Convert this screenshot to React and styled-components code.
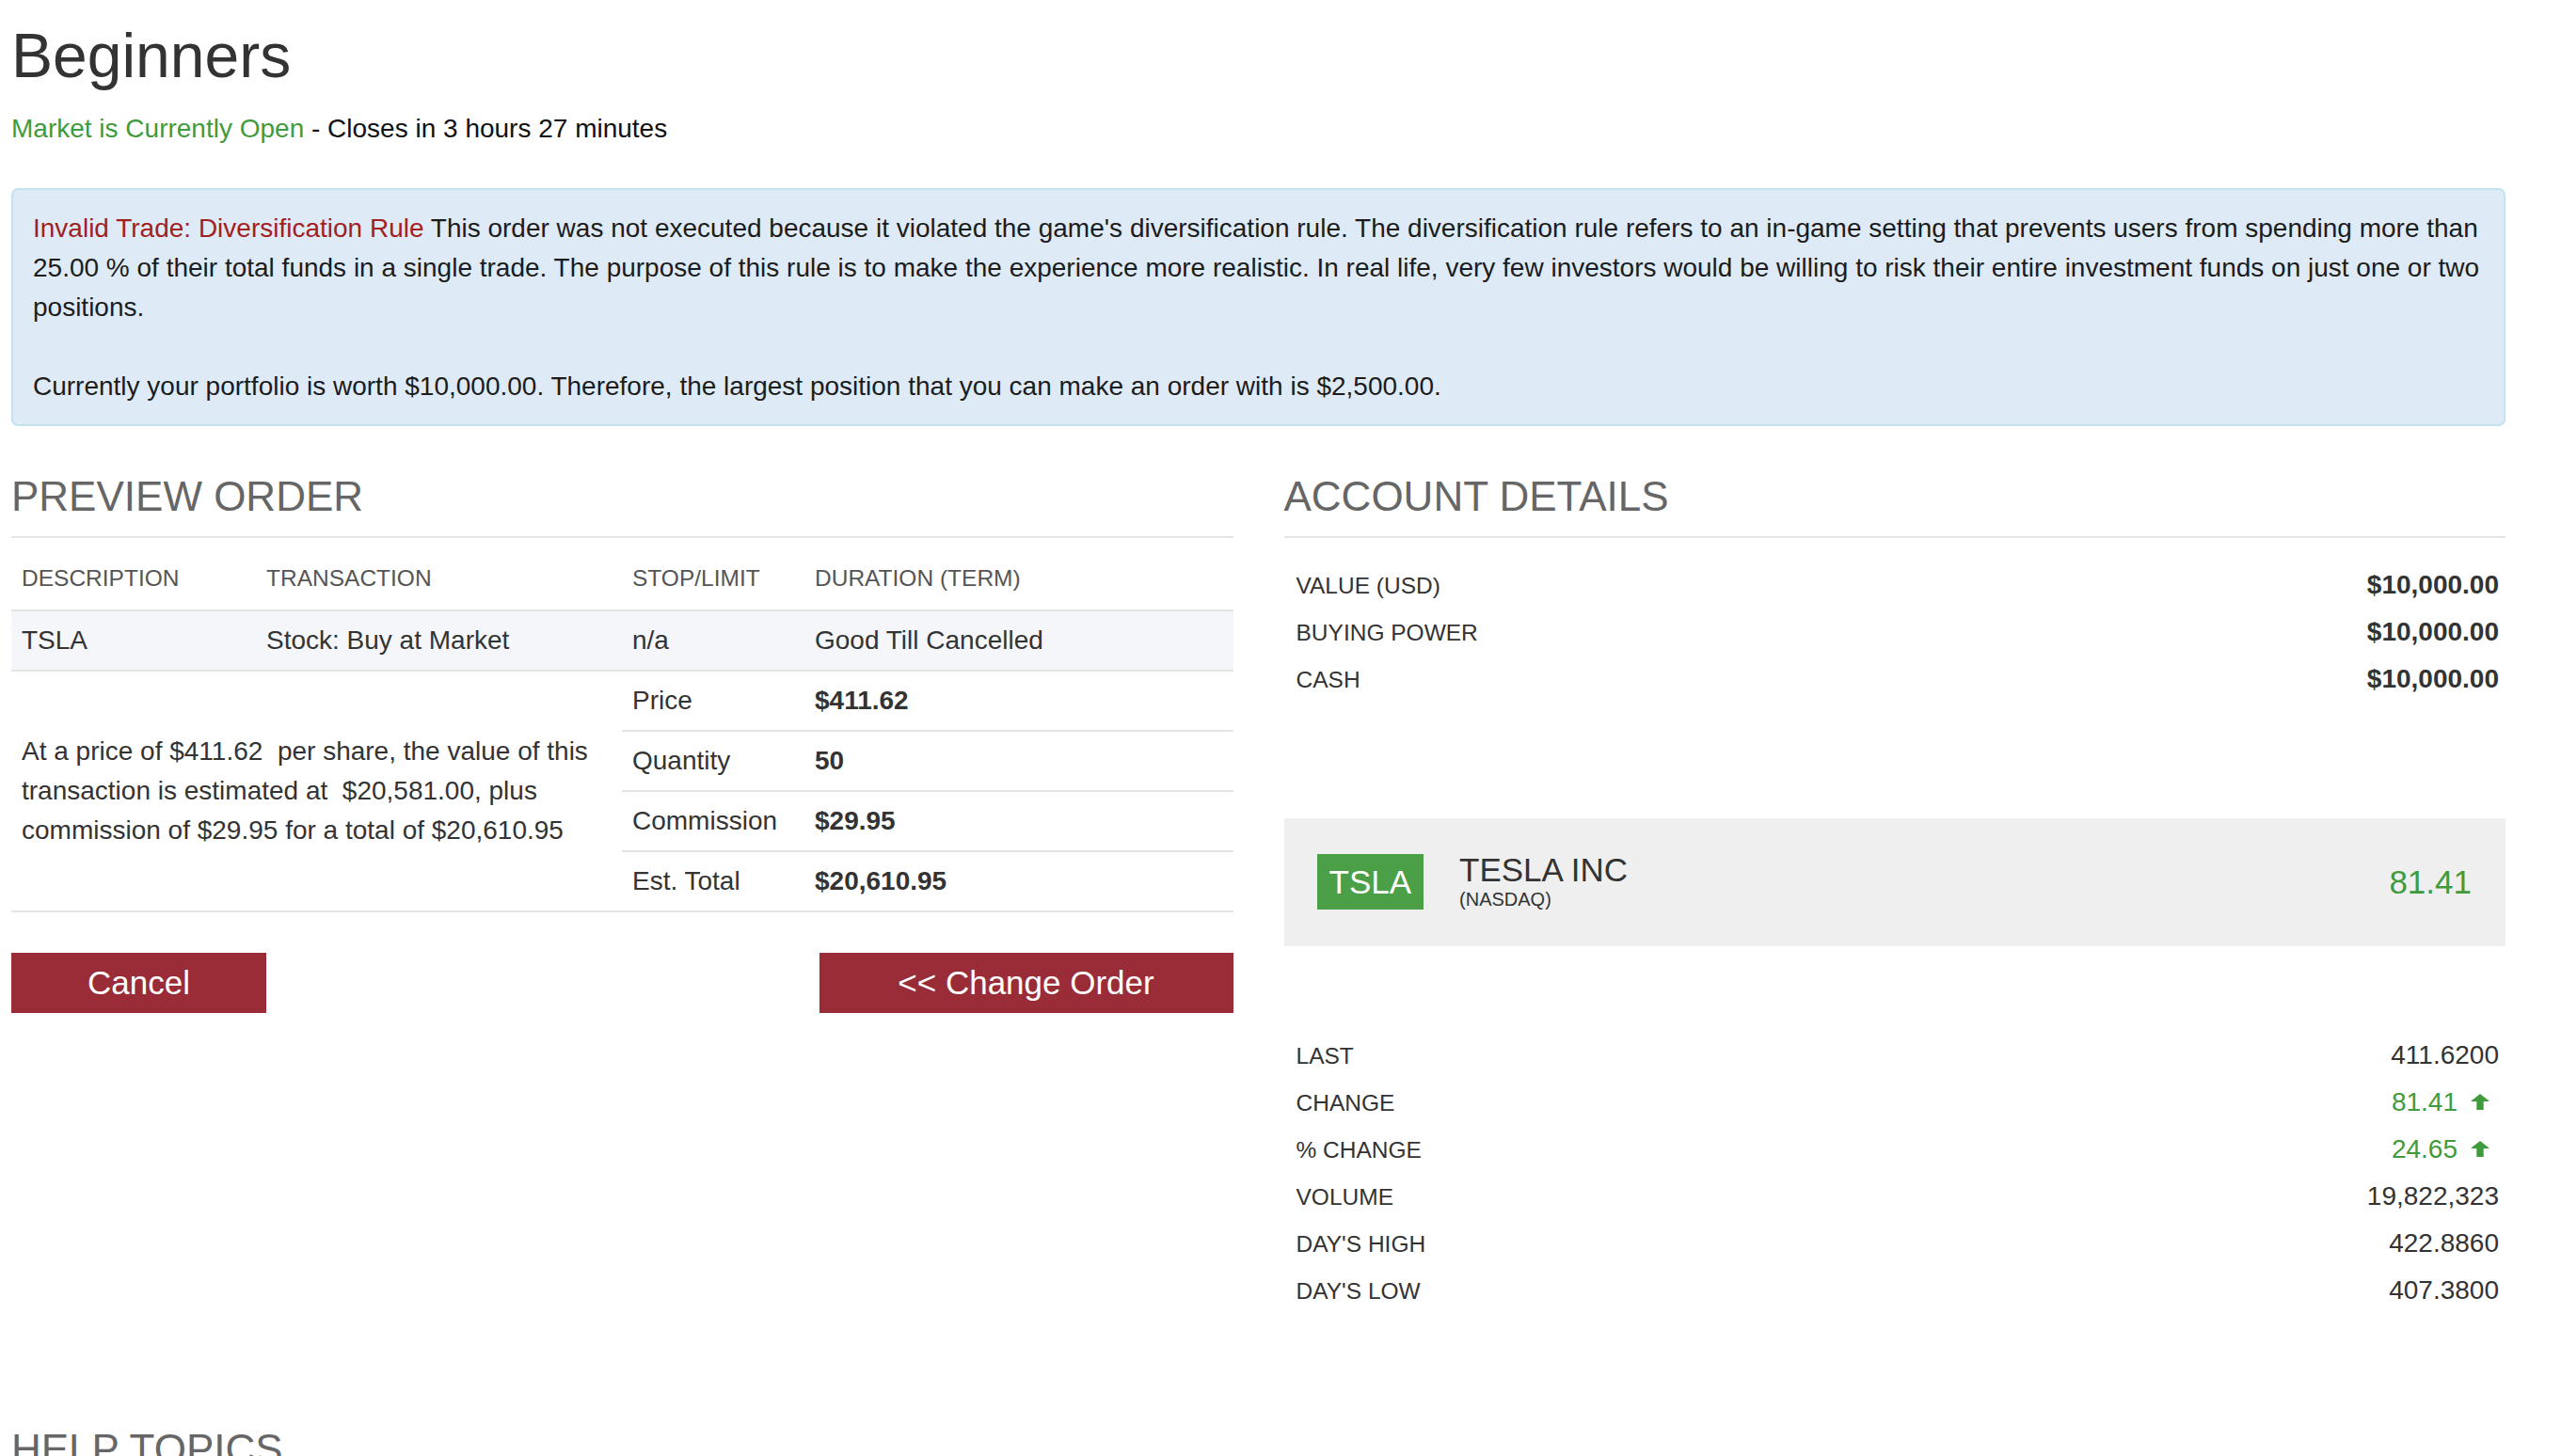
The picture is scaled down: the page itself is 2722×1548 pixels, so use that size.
import React from 'react';
import styled, { createGlobalStyle } from 'styled-components';

const GlobalStyle = createGlobalStyle`
  body {
    margin: 0;
    background: #ffffff;
    font-family: "Liberation Sans", Arial, Helvetica, sans-serif;
    font-size: 28px;
    line-height: 42px;
    color: #333333;
  }
`;

const Page = styled.div`
  width: 2651px;
  padding: 20px 0 0 12px;
`;

const Title = styled.h1`
  margin: 0 0 17px;
  font-size: 66px;
  font-weight: 400;
  line-height: 1.2;
  color: #333333;
`;

const Status = styled.div`
  color: #111111;
`;

const Green = styled.span`
  color: #3f9b3b;
`;

const Alert = styled.div`
  margin-top: 42px;
  padding: 20px 21px 19px;
  background: #deebf7;
  border: 2px solid #c4e3ee;
  border-radius: 7px;
  color: #1c1c1c;
`;

const AlertPara = styled.p`
  margin: 0 0 42px;
  &:last-child {
    margin-bottom: 0;
  }
`;

const AlertTitle = styled.span`
  color: #a2201f;
`;

const Columns = styled.div`
  display: grid;
  grid-template-columns: 1fr 1fr;
  column-gap: 54px;
  align-items: start;
`;

const SectionTitle = styled.h3`
  margin: 49px 0 12px;
  padding-bottom: 15px;
  border-bottom: 2px solid #e5e5e5;
  font-size: 44px;
  font-weight: 400;
  line-height: 1.2;
  color: #666666;
  text-transform: uppercase;
`;

const HelpTitle = styled(SectionTitle)`
  margin-top: 118px;
`;

const OrderTable = styled.table`
  width: 100%;
  border-collapse: collapse;
  table-layout: fixed;
`;

const Th = styled.th`
  padding: 10px 11px 12px;
  text-align: left;
  font-size: 24.5px;
  font-weight: 400;
  color: #555555;
  border-bottom: 2px solid #e3e3e3;
`;

const Row = styled.tr`
  background: ${props => props.$shade ? '#f5f6fa' : 'transparent'};
`;

const Td = styled.td`
  padding: 10px 11px;
  border-bottom: 2px solid #e3e3e3;
  vertical-align: middle;
  font-weight: ${props => props.$bold ? 700 : 400};
  color: #333333;
`;

const Actions = styled.div`
  display: flex;
  justify-content: space-between;
  margin-top: 43px;
`;

const Button = styled.button`
  width: ${props => props.$width}px;
  height: 64px;
  padding: 0;
  border: 0;
  background: #9a2c37;
  color: #ffffff;
  font-family: "Liberation Sans", Arial, Helvetica, sans-serif;
  font-size: 35px;
  cursor: pointer;
`;

const DetailList = styled.div`
  padding-top: ${props => props.$top || 0}px;
`;

const DetailRow = styled.div`
  display: flex;
  justify-content: space-between;
  align-items: baseline;
  height: 50px;
  line-height: 50px;
  padding: 0 7px 0 13px;
`;

const Label = styled.span`
  font-size: 24.5px;
  color: #333333;
`;

const Value = styled.span`
  display: flex;
  align-items: center;
  font-weight: ${props => props.$bold ? 700 : 400};
  color: ${props => props.$up ? '#3f9b3b' : '#333333'};
`;

const Arrow = styled.svg`
  margin: 0 10px 0 14px;
  color: #3f9b3b;
`;

const QuoteCard = styled.div`
  display: flex;
  align-items: center;
  height: 136px;
  margin: 123px 0 91px;
  padding: 0 36px 0 35px;
  background: #efefef;
`;

const Badge = styled.div`
  height: 59px;
  padding: 0 13px;
  background: #4a9f47;
  color: #ffffff;
  font-size: 35px;
  line-height: 59px;
`;

const Company = styled.div`
  display: flex;
  flex-direction: column;
  margin-left: 38px;
  flex: 1;
`;

const CompanyName = styled.span`
  font-size: 35px;
  line-height: 38px;
  color: #333333;
`;

const Exchange = styled.span`
  font-size: 20px;
  line-height: 25px;
  color: #333333;
`;

const QuoteChange = styled.span`
  font-size: 35px;
  color: #3f9b3b;
`;

const UpArrow = () => (
  <Arrow width="20" height="17" viewBox="0 0 19 16">
    <path d="M9.5 0 L18.5 7 Q19 7.6 18.3 7.6 H13 V16 H6 V7.6 H0.7 Q0 7.6 0.5 7 Z" fill="currentColor" />
  </Arrow>
);

const account = [
  ['VALUE (USD)', '$10,000.00'],
  ['BUYING POWER', '$10,000.00'],
  ['CASH', '$10,000.00'],
];

const stats = [
  ['LAST', '411.6200'],
  ['CHANGE', '81.41', true],
  ['% CHANGE', '24.65', true],
  ['VOLUME', '19,822,323'],
  ["DAY'S HIGH", '422.8860'],
  ["DAY'S LOW", '407.3800'],
];

const lines = [
  ['Price', '$411.62'],
  ['Quantity', '50'],
  ['Commission', '$29.95'],
  ['Est. Total', '$20,610.95'],
];

function App() {
  return (
    <Page>
      <GlobalStyle />
      <Title>Beginners</Title>
      <Status>
        <Green>Market is Currently Open</Green> - Closes in 3 hours 27 minutes
      </Status>

      <Alert>
        <AlertPara>
          <AlertTitle>Invalid Trade: Diversification Rule</AlertTitle> This order was not executed because it
          violated the game's diversification rule. The diversification rule refers to an in-game setting that
          prevents users from spending more than 25.00 % of their total funds in a single trade. The purpose of
          this rule is to make the experience more realistic. In real life, very few investors would be willing
          to risk their entire investment funds on just one or two positions.
        </AlertPara>
        <AlertPara>
          Currently your portfolio is worth $10,000.00. Therefore, the largest position that you can make an
          order with is $2,500.00.
        </AlertPara>
      </Alert>

      <Columns>
        <div>
          <SectionTitle>Preview Order</SectionTitle>
          <OrderTable>
            <colgroup>
              <col style={{ width: 260 }} />
              <col style={{ width: 389 }} />
              <col style={{ width: 194 }} />
              <col />
            </colgroup>
            <thead>
              <tr>
                <Th>DESCRIPTION</Th>
                <Th>TRANSACTION</Th>
                <Th>STOP/LIMIT</Th>
                <Th>DURATION (TERM)</Th>
              </tr>
            </thead>
            <tbody>
              <Row $shade>
                <Td>TSLA</Td>
                <Td>Stock: Buy at Market</Td>
                <Td>n/a</Td>
                <Td>Good Till Cancelled</Td>
              </Row>
              {lines.map(([label, value], i) => (
                <Row key={label}>
                  {i === 0 && (
                    <Td colSpan={2} rowSpan={4}>
                      At a price of $411.62{'\u00a0'} per share, the value of this transaction is estimated
                      at{'\u00a0'} $20,581.00, plus commission of $29.95 for a total of $20,610.95
                    </Td>
                  )}
                  <Td>{label}</Td>
                  <Td $bold>{value}</Td>
                </Row>
              ))}
            </tbody>
          </OrderTable>
          <Actions>
            <Button $width={271}>Cancel</Button>
            <Button $width={440}>&lt;&lt; Change Order</Button>
          </Actions>
        </div>

        <div>
          <SectionTitle>Account Details</SectionTitle>
          <DetailList $top={13}>
            {account.map(([label, value]) => (
              <DetailRow key={label}>
                <Label>{label}</Label>
                <Value $bold>{value}</Value>
              </DetailRow>
            ))}
          </DetailList>

          <QuoteCard>
            <Badge>TSLA</Badge>
            <Company>
              <CompanyName>TESLA INC</CompanyName>
              <Exchange>(NASDAQ)</Exchange>
            </Company>
            <QuoteChange>81.41</QuoteChange>
          </QuoteCard>

          <DetailList>
            {stats.map(([label, value, up]) => (
              <DetailRow key={label}>
                <Label>{label}</Label>
                <Value $up={up}>
                  {value}
                  {up && <UpArrow />}
                </Value>
              </DetailRow>
            ))}
          </DetailList>
        </div>
      </Columns>

      <HelpTitle>Help Topics</HelpTitle>
    </Page>
  );
}

export default App;
